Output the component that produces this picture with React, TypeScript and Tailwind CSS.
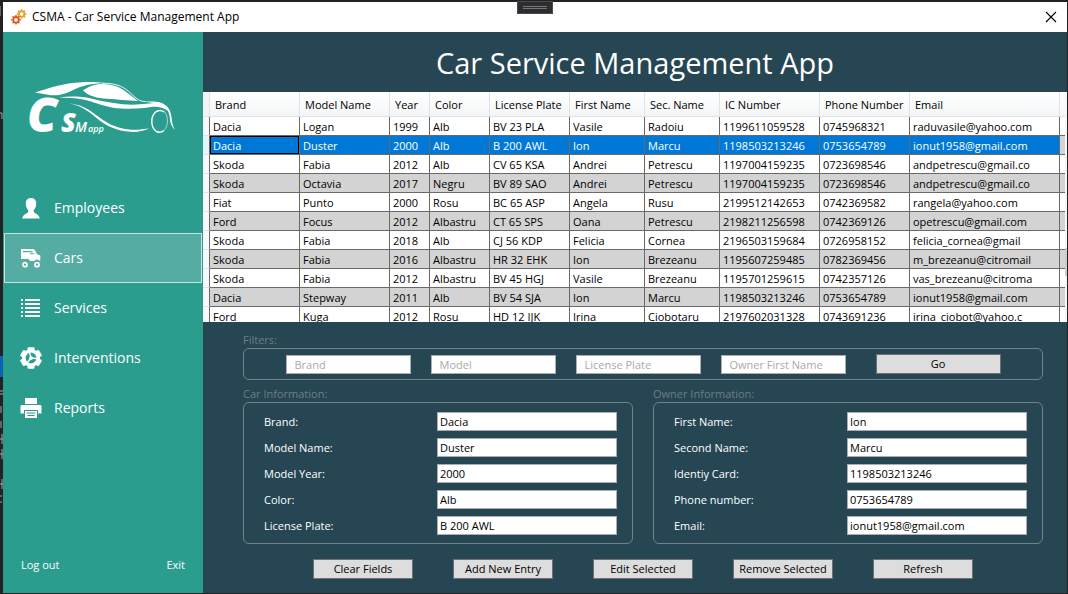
import { useState } from "react";

const columns = [
  { label: "Brand", width: "w-[90px]" },
  { label: "Model Name", width: "w-[90px]" },
  { label: "Year", width: "w-[40px]" },
  { label: "Color", width: "w-[60px]" },
  { label: "License Plate", width: "w-[80px]" },
  { label: "First Name", width: "w-[75px]" },
  { label: "Sec. Name", width: "w-[75px]" },
  { label: "IC Number", width: "w-[100px]" },
  { label: "Phone Number", width: "w-[90px]" },
  { label: "Email", width: "w-[150px]" },
];

const cars = [
  ["Dacia", "Logan", "1999", "Alb", "BV 23 PLA", "Vasile", "Radoiu", "1199611059528", "0745968321", "raduvasile@yahoo.com"],
  ["Dacia", "Duster", "2000", "Alb", "B 200 AWL", "Ion", "Marcu", "1198503213246", "0753654789", "ionut1958@gmail.com"],
  ["Skoda", "Fabia", "2012", "Alb", "CV 65 KSA", "Andrei", "Petrescu", "1197004159235", "0723698546", "andpetrescu@gmail.co"],
  ["Skoda", "Octavia", "2017", "Negru", "BV 89 SAO", "Andrei", "Petrescu", "1197004159235", "0723698546", "andpetrescu@gmail.co"],
  ["Fiat", "Punto", "2000", "Rosu", "BC 65 ASP", "Angela", "Rusu", "2199512142653", "0742369582", "rangela@yahoo.com"],
  ["Ford", "Focus", "2012", "Albastru", "CT 65 SPS", "Oana", "Petrescu", "2198211256598", "0742369126", "opetrescu@gmail.com"],
  ["Skoda", "Fabia", "2018", "Alb", "CJ 56 KDP", "Felicia", "Cornea", "2196503159684", "0726958152", "felicia_cornea@gmail"],
  ["Skoda", "Fabia", "2016", "Albastru", "HR 32 EHK", "Ion", "Brezeanu", "1195607259485", "0782369456", "m_brezeanu@citromail"],
  ["Skoda", "Fabia", "2012", "Albastru", "BV 45 HGJ", "Vasile", "Brezeanu", "1195701259615", "0742357126", "vas_brezeanu@citroma"],
  ["Dacia", "Stepway", "2011", "Alb", "BV 54 SJA", "Ion", "Marcu", "1198503213246", "0753654789", "ionut1958@gmail.com"],
  ["Ford", "Kuga", "2012", "Rosu", "HD 12 IJK", "Irina", "Ciobotaru", "2197602031328", "0743691236", "irina_ciobot@yahoo.c"],
];

const carFields = [
  ["Brand:", "Dacia"],
  ["Model Name:", "Duster"],
  ["Model Year:", "2000"],
  ["Color:", "Alb"],
  ["License Plate:", "B 200 AWL"],
];

const ownerFields = [
  ["First Name:", "Ion"],
  ["Second Name:", "Marcu"],
  ["Identiy Card:", "1198503213246"],
  ["Phone number:", "0753654789"],
  ["Email:", "ionut1958@gmail.com"],
];

const gearTeeth = [0, 45, 90, 135, 180, 225, 270, 315];
const bigTeeth = [0, 60, 120, 180, 240, 300];

function Cog({ cx, cy, color }: { cx: number; cy: number; color: string }) {
  return (
    <g transform={`translate(${cx} ${cy})`} stroke={color} fill="none">
      <circle r="2.8" strokeWidth="1.9" />
      {gearTeeth.map((a) => (
        <path key={a} d="M0-3.2V-4.8" strokeWidth="1.6" transform={`rotate(${a})`} />
      ))}
    </g>
  );
}

function AppIcon() {
  return (
    <svg className="size-4" viewBox="0 0 16 16" aria-hidden="true">
      <Cog cx={10.6} cy={5} color="#e9a227" />
      <Cog cx={5} cy={10.8} color="#d9581f" />
    </svg>
  );
}

function Logo() {
  return (
    <svg className="h-20 w-[150px]" viewBox="0 0 150 80" role="img" aria-label="CSM app" fill="#fff">
      <path d="M8 13.500C22 9 36 4 55 3.200C65 2.800 72 3.200 79 4.200C66 4.300 58 6 50 9.200C40 14 34 16.800 24 16.300Z" />
      <path d="M56 11.500C62 7.500 67 5 75 5C87 5.200 93 8.500 98 12L111 22C100 21.500 90 20.500 80 19.800C70 19 62 17.500 56 11.500Z" />
      <path
        d="M75 4.200C92 4.200 98 9 104 14.500C110 20.500 113 22.300 118 22.500"
        fill="none"
        stroke="#fff"
        strokeWidth="0.9"
      />
      <path d="M32 18.600C42 17 54 17.200 64 19.500C78 23 92 25.500 106 25.700C118 25.500 126 23.500 132 24.200C138 25.500 141 29 142.500 33C137 28 130 27 124 28C112 30.200 96 30 86 28.700C74 26.500 66 22.500 56 20.500C48 19 40 18.800 32 18.600Z" />
      <path d="M112 21.800C120 23.200 128 21.600 134 23.800C141 26.500 143.500 31 144.500 38C145 44 146 48 148 50.500C144.500 48 143.200 44 142.700 38C141.500 30 138 26.500 132 25Z" />
      <path d="M42 24.300C58 26 66 34 76 41C86 48 98 51 110 50.800C115 50.600 119 49.500 122 49.500C117 52 110 53.200 103 52.800C90 52 80 47 72 41C64 34.500 56 27 42 24.300Z" />
      <path
        d="M137.500 33C130 28.500 124.800 35 124.800 42.500C124.800 50 130.500 56.500 137 51.500"
        fill="none"
        stroke="#fff"
        strokeWidth="1.400"
      />
      <path d="M137.500 33C141.500 37 141.500 47 137 51.500" fill="none" stroke="#fff" strokeWidth="0.600" />
      <g className="font-['Open_Sans','Noto_Sans',sans-serif] italic">
        <text x="0" y="53" fontSize="48" fontWeight="800">C</text>
        <text x="34" y="53" fontSize="27" fontWeight="800">S</text>
        <text x="48" y="53" fontSize="14" fontWeight="600">M</text>
        <text x="61" y="53" fontSize="9" fontWeight="600">app</text>
      </g>
    </svg>
  );
}

const icons = {
  Employees: (
    <path d="M11 1C14.600 1 16.400 3.400 16.200 7C16 9.800 15.200 11.500 13.800 13V15C14.500 16.800 19 16.800 19.800 21.500H2.200C3 16.800 7.500 16.800 8.200 15V13C6.800 11.500 6 9.800 5.800 7C5.600 3.400 7.400 1 11 1Z" />
  ),
  Cars: (
    <>
      <path
        fillRule="evenodd"
        d="M1 2H13.500C15.300 3 16 5 17 7.300L20.300 8.500V13.500H18.800C18 12 15.500 12 14.500 14H10C9 12 7.500 11.500 5.500 12H1ZM3 4V5.200H12.800L12.300 4ZM10 6.200V7.300H14.500L14 6.200Z"
      />
      <circle cx="5" cy="17.700" r="2" fill="none" stroke="#fff" strokeWidth="1.800" />
      <circle cx="17" cy="17.700" r="2" fill="none" stroke="#fff" strokeWidth="1.800" />
    </>
  ),
  Services: (
    <path d="M1 2h2v2H1zM5 2h15v2H5zM1 6h2v2H1zM5 6h15v2H5zM1 10h2v2H1zM5 10h15v2H5zM1 14h2v2H1zM5 14h15v2H5zM1 18h2v2H1zM5 18h15v2H5z" />
  ),
  Interventions: (
    <>
      {bigTeeth.map((a) => (
        <rect key={a} x="7.500" y="0.200" width="7" height="5" rx="1" transform={`rotate(${a} 11 11)`} />
      ))}
      <circle cx="11" cy="11" r="7.200" fill="none" stroke="#fff" strokeWidth="3.600" />
      <path d="M11 11L9.500 5.500M11 11L16.500 11.500M11 11L7.500 15.500" stroke="#fff" strokeWidth="1.400" />
      <circle cx="11" cy="11" r="1.900" />
    </>
  ),
  Reports: (
    <>
      <path d="M5 1H17V7H5ZM2 8H20C21 8 21.500 8.500 21.500 9.500V16.500H18V13H4V16.500H0.500V9.500C0.500 8.500 1 8 2 8Z" />
      <path fillRule="evenodd" d="M5 14H17V21H5ZM6.500 15.500V16.500H15.500V15.500ZM7.500 18V19H14.500V18Z" />
    </>
  ),
};

type Section = keyof typeof icons;

function Sidebar() {
  const [active, setActive] = useState<Section>("Cars");
  return (
    <aside className="flex w-[200px] shrink-0 flex-col bg-[#2a9d8f] text-white">
      <div className="flex h-[151px] items-start pt-[47px] pl-6">
        <Logo />
      </div>
      <nav className="flex flex-col px-px">
        {(Object.keys(icons) as Section[]).map((name) => (
          <button
            key={name}
            type="button"
            onClick={() => setActive(name)}
            aria-current={name === active ? "page" : undefined}
            className={`flex h-[50px] items-center gap-3 border pl-[15px] text-left text-[14px] ${
              name === active ? "border-[#c5e4e0] bg-[#55aca2]" : "border-transparent"
            }`}
          >
            <svg className="size-[22px]" viewBox="0 0 22 22" fill="#fff" aria-hidden="true">
              {icons[name]}
            </svg>
            {name}
          </button>
        ))}
      </nav>
      <div className="mt-auto flex justify-between px-[18px] pb-5">
        <button type="button" className="leading-4">Log out</button>
        <button type="button" className="leading-4">Exit</button>
      </div>
    </aside>
  );
}

function CarsTable() {
  const [selected, setSelected] = useState(1);
  return (
    <div className="flex h-[230px] overflow-hidden bg-white text-black">
      <table className="min-w-0 flex-1 table-fixed border-separate border-spacing-0 self-start">
        <thead>
          <tr className="h-[25px] bg-linear-to-b from-white to-[#f3f5f7]">
            <th aria-label="Row" className="w-[7px] border-r border-b border-[#dfe2e6] bg-[#f3f4f6] p-0" />
            {columns.map((c) => (
              <th
                key={c.label}
                className={`${c.width} border-r border-b border-[#dfe2e6] p-0 pt-[2px] pl-[5px] text-left font-normal whitespace-nowrap`}
              >
                {c.label}
              </th>
            ))}
            <th aria-label="Filler" className="border-b border-[#dfe2e6] p-0" />
          </tr>
        </thead>
        <tbody>
          {cars.map((row, r) => {
            const on = r === selected;
            const alt = r % 2 === 1;
            return (
              <tr
                key={r}
                onClick={() => setSelected(r)}
                className={`h-[19px] ${alt ? "bg-[#d3d3d3]" : "bg-white"}`}
              >
                <td className={`border-r border-b border-r-[#696969] border-b-[#dfe2e6] p-0 ${on ? "bg-[#e2f5fb]" : "bg-[#f8f9fa]"}`} />
                {row.map((value, c) => (
                  <td
                    key={c}
                    className={`overflow-hidden border-r border-b border-[#696969] p-0 pt-[2px] pl-[3px] leading-4 whitespace-nowrap ${
                      on ? "bg-[#0078d7] text-white" : ""
                    } ${on && c === 0 ? "shadow-[inset_0_0_0_1px_#000]" : ""}`}
                  >
                    {value}
                  </td>
                ))}
                <td className="border-b border-[#696969] p-0" />
              </tr>
            );
          })}
        </tbody>
      </table>
      <div className="w-[2px] shrink-0 bg-[#f7f7f7] pt-[156px]">
        <div className="h-7 bg-[#cdcdcd]" />
      </div>
    </div>
  );
}

const panel = "rounded-[6px] border border-[#71838b]";
const button = "h-5 border border-[#707070] bg-[#dddddd] text-center leading-4 text-black";
const input = "h-[19px] min-w-0 border border-[#abadb3] bg-white text-black outline-none";

function Details({ title, fields }: { title: string; fields: string[][] }) {
  return (
    <section className="flex flex-1 flex-col">
      <h2 className="h-4 leading-4 text-[#6d7d85]">{title}</h2>
      <div className={`${panel} flex flex-col gap-[7px] pt-[9px] pb-2 pr-[15px] pl-5`}>
        {fields.map(([label, value]) => (
          <label key={label} className="flex items-center justify-between">
            {label}
            <input className={`${input} w-[180px] px-[2px]`} defaultValue={value} />
          </label>
        ))}
      </div>
    </section>
  );
}

function DesktopEdge() {
  return (
    <svg className="w-[3px] shrink-0" height="560" viewBox="0 0 3 560" fill="none" stroke="#a5a5a5" aria-hidden="true">
      <path d="M0 354h3v21h-3z" fill="#0a64b4" stroke="none" />
      <path d="M0 4v10M0 111h2v6M0 389h3M0 392h3M1 404v7M1 419v7M0 437h3M2 432v10M0 452h3M2 447v10M0 482h3M2 477v10M0 494h2M0 500h2" />
    </svg>
  );
}

export default function App() {
  return (
    <div className="flex min-h-screen bg-[#222225] pt-[2px] pr-px pb-px font-['Open_Sans','Noto_Sans',sans-serif] text-[11px] leading-4">
      <DesktopEdge />
      <div className="flex min-w-0 flex-1 flex-col">
        <header className="relative flex h-[30px] items-center justify-between bg-white px-2 text-black">
          <div className="flex items-center gap-[5px]">
            <AppIcon />
            <span className="text-[12px]">CSMA - Car Service Management App</span>
          </div>
          <div className="absolute -top-px left-1/2 flex h-[13px] w-9 -translate-x-1/2 flex-col items-center justify-center gap-px border border-[#4a4a4e] bg-[#2d2d30]">
            <span className="h-px w-6 bg-[#77777a]" />
            <span className="h-px w-6 bg-[#77777a]" />
          </div>
          <button type="button" aria-label="Close" className="flex size-4 items-center justify-center">
            <svg className="size-3" viewBox="0 0 12 12" stroke="#000" strokeWidth="1.100" aria-hidden="true">
              <path d="M1 1L11 11M11 1L1 11" />
            </svg>
          </button>
        </header>
        <div className="flex flex-1">
          <Sidebar />
          <main className="flex min-w-0 flex-1 flex-col bg-[#264653] text-white">
            <h1 className="h-[60px] text-center text-[29px] leading-[62px]">Car Service Management App</h1>
            <CarsTable />
            <div className="flex flex-col pt-[10px] pr-6 pl-10">
              <section>
                <h2 className="h-4 leading-4 text-[#6d7d85]">Filters:</h2>
                <form className={`${panel} flex h-8 items-center justify-center gap-5`} onSubmit={(e) => e.preventDefault()}>
                  {["Brand", "Model", "License Plate", "Owner First Name"].map((name) => (
                    <input
                      key={name}
                      aria-label={name}
                      placeholder={name}
                      className={`${input} w-[125px] px-2 placeholder:text-[#a9a9a9]`}
                    />
                  ))}
                  <button className={`${button} ml-[10px] w-[125px]`}>Go</button>
                </form>
              </section>
              <div className="mt-[6px] flex gap-5">
                <Details title="Car Information:" fields={carFields} />
                <Details title="Owner Information:" fields={ownerFields} />
              </div>
              <div className="mt-[15px] flex justify-center gap-10">
                {["Clear Fields", "Add New Entry", "Edit Selected", "Remove Selected", "Refresh"].map((name) => (
                  <button key={name} type="button" className={`${button} w-[100px] whitespace-nowrap`}>
                    {name}
                  </button>
                ))}
              </div>
            </div>
          </main>
        </div>
      </div>
    </div>
  );
}
